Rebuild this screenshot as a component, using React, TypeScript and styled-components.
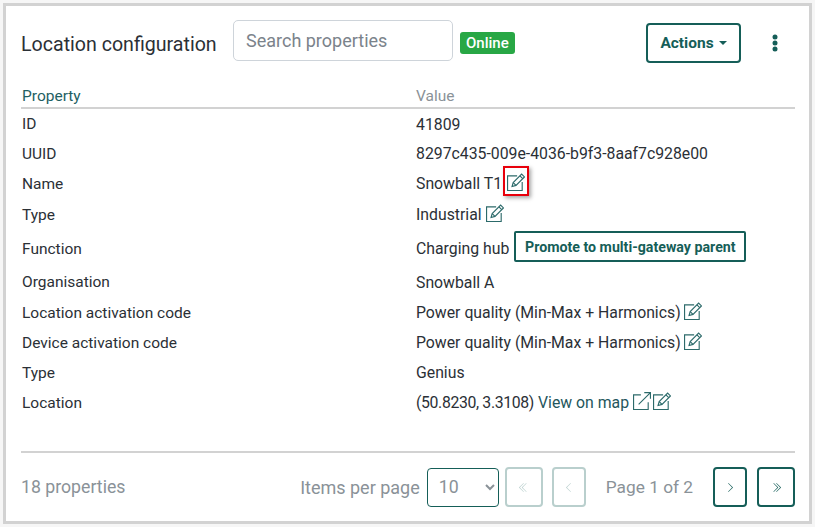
import React from "react";
import styled, { createGlobalStyle } from "styled-components";
import {
  BsChevronDoubleLeft,
  BsChevronDoubleRight,
  BsChevronLeft,
  BsChevronRight,
} from "react-icons/bs";

const teal = "#155e58";
const font = `Roboto, "Liberation Sans", sans-serif`;

const GlobalStyle = createGlobalStyle`
  html, body {
    margin: 0;
    background: #f6f6f6;
    font-family: ${font};
    color: #2b3036;
  }
  * { box-sizing: border-box; }
`;

const Card = styled.div`
  margin: 3px;
  width: 809px;
  height: 521px;
  background: #fff;
  border: 3px solid #d2d2d2;
  padding: 14px 14px 0 15px;
  display: flex;
  flex-direction: column;
`;

const Header = styled.div`
  display: flex;
  align-items: center;
  height: 41px;
  margin-bottom: 25px;
`;

const Title = styled.h1`
  margin: 0 15px 0 0;
  font-size: 19.6px;
  font-weight: 400;
  width: 197px;
  white-space: nowrap;
  padding-top: 7px;
`;

const Search = styled.input`
  width: 220px;
  height: 41px;
  border: 1px solid #ced4da;
  border-radius: 5px;
  padding: 0 12px;
  font-family: ${font};
  font-size: 18px;
  outline: none;
  &::placeholder {
    color: #7b838b;
  }
`;

const Badge = styled.span`
  margin-left: 7px;
  margin-top: 5px;
  background: #28a745;
  color: #fff;
  font-size: 15px;
  font-weight: 500;
  border-radius: 3px;
  padding: 2px 6px;
  height: 22px;
  line-height: 18px;
`;

const Spacer = styled.div`
  flex: 1;
`;

const ActionsButton = styled.button`
  width: 95px;
  height: 40px;
  margin-top: 5px;
  border: 2px solid ${teal};
  border-radius: 4px;
  background: #fff;
  color: ${teal};
  font-family: ${font};
  font-size: 15.5px;
  font-weight: 700;
  display: flex;
  align-items: center;
  justify-content: center;
  gap: 5px;
  &::after {
    content: "";
    border-top: 4.5px solid ${teal};
    border-left: 4.5px solid transparent;
    border-right: 4.5px solid transparent;
  }
`;

const MoreButton = styled.svg`
  width: 6px;
  height: 18px;
  margin: 5px 17px 0 31px;
  fill: ${teal};
`;

const Table = styled.table`
  width: 100%;
  border-collapse: collapse;
  font-size: 15.5px;
  table-layout: fixed;
`;

const HeadCell = styled.th<{ $muted?: boolean }>`
  text-align: left;
  font-weight: 400;
  height: 22px;
  padding: 0 0 1px 1px;
  border-bottom: 2px solid #d2d2d2;
  color: ${(p) => (p.$muted ? "#8a9298" : "#1f5f63")};
  &:first-child {
    width: 394px;
  }
`;

const Row = styled.tr<{ $h: number }>`
  height: ${(p) => p.$h}px;
`;

const Cell = styled.td`
  padding: 1px 0 0 1px;
  white-space: nowrap;
`;

const ValueCell = styled(Cell)`
  font-size: 15.8px;
`;

const ValueLine = styled.div`
  display: flex;
  align-items: center;
`;

const IconSlot = styled.span<{ $gap?: number }>`
  position: relative;
  display: inline-flex;
  margin-left: ${(p) => p.$gap ?? 4}px;
  margin-top: -3px;
`;

const LineIcon = styled.svg`
  width: 18px;
  height: 18px;
  fill: none;
  stroke: #2c6a6a;
  stroke-width: 1;
`;

const Highlight = styled.span`
  position: absolute;
  left: -4px;
  top: -7px;
  width: 26px;
  height: 30px;
  border: 2px solid #e8000b;
  box-shadow: 2px 2px 4px rgba(0, 0, 0, 0.35);
`;

const Coords = styled.span`
  letter-spacing: -0.35px;
`;

const MapLink = styled.span`
  color: #24565c;
  margin-left: 4px;
`;

const PromoteButton = styled.button`
  margin: 0 0 4px 5px;
  width: 232px;
  height: 31px;
  border: 2px solid ${teal};
  border-radius: 2px;
  background: #fff;
  color: ${teal};
  font-family: ${font};
  font-size: 14.2px;
  font-weight: 700;
  padding: 0;
`;

const Footer = styled.div`
  margin-top: auto;
  border-top: 2px solid #d2d2d2;
  display: flex;
  align-items: center;
  height: 70px;
  color: #8a9298;
  font-size: 17.7px;
`;

const PerPage = styled.span`
  margin-right: 7px;
  font-size: 18px;
`;

const PageSelect = styled.select`
  width: 72px;
  height: 39px;
  border: 1px solid ${teal};
  border-radius: 4px;
  background: #fff;
  color: #8a9298;
  font-family: ${font};
  font-size: 17.7px;
  padding-left: 7px;
  margin-right: 6px;
`;

const PageButton = styled.button<{ $off?: boolean; $w: number }>`
  width: ${(p) => p.$w}px;
  height: 40px;
  border: 2px solid ${(p) => (p.$off ? "#b9cfcd" : teal)};
  border-radius: 4px;
  background: #fff;
  color: ${(p) => (p.$off ? "#b9cfcd" : teal)};
  font-size: 11px;
  display: flex;
  align-items: center;
  justify-content: center;
  padding: 0;
`;

const PageLabel = styled.span`
  margin: 0 20px;
  font-size: 17.3px;
`;

const Gap = styled.span<{ $w: number }>`
  width: ${(p) => p.$w}px;
`;

const PencilIcon = () => (
  <LineIcon viewBox="1 1 16 16">
    <path d="M10 3.5H1.5v13h13V9" />
    <path d="M5.5 13l1-3.5L14 2l2.5 2.5L9 12z" />
    <path d="M12.5 3.5L15 6M6.5 9.5L9 12" />
  </LineIcon>
);

const LinkIcon = () => (
  <LineIcon viewBox="1 1 16 16">
    <path d="M8 3.5H1.5v13h13V10" />
    <path d="M6 12L16.5 1.5M11 1.5h5.5V7" />
  </LineIcon>
);

type Prop = { name: string; h: number; value: React.ReactNode };

const quality = (
  <ValueLine>
    Power quality (Min-Max + Harmonics)
    <IconSlot $gap={3}>
      <PencilIcon />
    </IconSlot>
  </ValueLine>
);

const properties: Prop[] = [
  { name: "ID", h: 30, value: "41809" },
  { name: "UUID", h: 30, value: "8297c435-009e-4036-b9f3-8aaf7c928e00" },
  {
    name: "Name",
    h: 30,
    value: (
      <ValueLine>
        Snowball T1
        <IconSlot $gap={5}>
          <PencilIcon />
          <Highlight />
        </IconSlot>
      </ValueLine>
    ),
  },
  {
    name: "Type",
    h: 32,
    value: (
      <ValueLine>
        Industrial
        <IconSlot>
          <PencilIcon />
        </IconSlot>
      </ValueLine>
    ),
  },
  {
    name: "Function",
    h: 36,
    value: (
      <ValueLine>
        Charging hub
        <PromoteButton>Promote to multi-gateway parent</PromoteButton>
      </ValueLine>
    ),
  },
  { name: "Organisation", h: 31, value: "Snowball A" },
  { name: "Location activation code", h: 30, value: quality },
  { name: "Device activation code", h: 30, value: quality },
  { name: "Type", h: 30, value: "Genius" },
  {
    name: "Location",
    h: 30,
    value: (
      <ValueLine>
        <Coords>(50.8230, 3.3108)</Coords>
        <MapLink>View on map</MapLink>
        <IconSlot>
          <LinkIcon />
        </IconSlot>
        <IconSlot $gap={2}>
          <PencilIcon />
        </IconSlot>
      </ValueLine>
    ),
  },
];

export default function App() {
  return (
    <>
      <GlobalStyle />
      <Card>
        <Header>
          <Title>Location configuration</Title>
          <Search placeholder="Search properties" />
          <Badge>Online</Badge>
          <Spacer />
          <ActionsButton>Actions</ActionsButton>
          <MoreButton viewBox="0 0 6 18">
            <circle cx="3" cy="3" r="2.5" />
            <circle cx="3" cy="9" r="2.5" />
            <circle cx="3" cy="15" r="2.5" />
          </MoreButton>
        </Header>
        <Table>
          <thead>
            <tr>
              <HeadCell>Property</HeadCell>
              <HeadCell $muted>Value</HeadCell>
            </tr>
          </thead>
          <tbody>
            {properties.map((p) => (
              <Row key={p.name + p.h} $h={p.h}>
                <Cell>{p.name}</Cell>
                <ValueCell>{p.value}</ValueCell>
              </Row>
            ))}
          </tbody>
        </Table>
        <Footer>
          18 properties
          <Spacer />
          <PerPage>Items per page</PerPage>
          <PageSelect defaultValue="10">
            <option>10</option>
            <option>25</option>
            <option>50</option>
          </PageSelect>
          <PageButton $off $w={38}>
            <BsChevronDoubleLeft />
          </PageButton>
          <Gap $w={9} />
          <PageButton $off $w={34}>
            <BsChevronLeft />
          </PageButton>
          <PageLabel>Page 1 of 2</PageLabel>
          <PageButton $w={34}>
            <BsChevronRight />
          </PageButton>
          <Gap $w={10} />
          <PageButton $w={38}>
            <BsChevronDoubleRight />
          </PageButton>
        </Footer>
      </Card>
    </>
  );
}
